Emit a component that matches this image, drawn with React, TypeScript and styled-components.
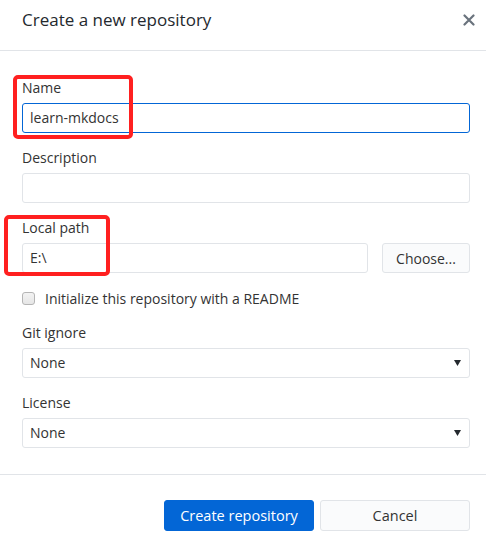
import React from "react";
import styled, { createGlobalStyle } from "styled-components";

const Global = createGlobalStyle`
  html, body { margin: 0; padding: 0; background: #fff; }
  body { font-family: "Open Sans", "Noto Sans", sans-serif; color: #333; }
  * { box-sizing: border-box; }
`;

const Dialog = styled.div`
  position: relative;
  width: 486px;
  height: 545px;
  background: #fff;
  display: flex;
  flex-direction: column;
`;

const Header = styled.header`
  height: 51px;
  border-bottom: 1px solid #e1e4e8;
  display: flex;
  align-items: flex-start;
  justify-content: space-between;
  padding: 8px 11px 0 22px;
`;

const Title = styled.h1`
  margin: 0;
  font-size: 17px;
  font-weight: 400;
  line-height: 24px;
  color: #24292e;
`;

const Close = styled.button`
  border: 0;
  background: none;
  padding: 0;
  margin-top: 6px;
  width: 12px;
  height: 12px;
  display: flex;
  color: #6a737d;
`;

const Form = styled.div`
  display: flex;
  flex-direction: column;
  gap: 15px;
  padding: 27px 16px 26px 22px;
  border-bottom: 1px solid #e1e4e8;
`;

const Group = styled.div`
  display: flex;
  flex-direction: column;
  gap: 5px;
`;

const Label = styled.label`
  font-size: 14px;
  line-height: 20px;
  color: #333;
`;

const Input = styled.div<{ $focus?: boolean }>`
  height: 30px;
  border: 1px solid ${(p) => (p.$focus ? "#0366d6" : "#e1e4e8")};
  border-radius: 3px;
  padding: 0 7px;
  font-size: 14px;
  line-height: 28px;
  color: #333;
  flex: 1 1 auto;
  background: #fff;
`;

const Row = styled.div`
  display: flex;
  gap: 14px;
`;

const SmallButton = styled.button`
  width: 88px;
  height: 30px;
  flex: none;
  border: 1px solid #e1e4e8;
  border-radius: 3px;
  background: #fafbfc;
  font-family: inherit;
  font-size: 14px;
  color: #333;
  padding: 0;
`;

const CheckRow = styled.label`
  height: 20px;
  display: flex;
  align-items: center;
  gap: 10px;
  font-size: 14px;
  color: #333;
`;

const Box = styled.span`
  width: 13px;
  height: 13px;
  border: 1px solid #b5b5b5;
  border-radius: 3px;
  background: linear-gradient(#f3f3f3, #e6e6e6);
`;

const Select = styled(Input)`
  display: flex;
  align-items: center;
  justify-content: space-between;
  padding-right: 8px;
`;

const Footer = styled.footer`
  display: flex;
  justify-content: flex-end;
  gap: 6px;
  padding: 25px 16px 0 0;
`;

const Btn = styled.button<{ $primary?: boolean }>`
  width: 150px;
  height: 31px;
  border-radius: 3px;
  font-family: inherit;
  font-size: 14.5px;
  padding: 0;
  border: 1px solid ${(p) => (p.$primary ? "#0366d6" : "#e1e4e8")};
  background: ${(p) => (p.$primary ? "#0366d6" : "#fafbfc")};
  color: ${(p) => (p.$primary ? "#fff" : "#333")};
`;

const Highlight = styled.div`
  position: absolute;
  border: 4px solid #ff2020;
  border-radius: 5px;
  pointer-events: none;
`;

const Arrow = () => (
  <svg width="7" height="6" viewBox="0 0 7 6">
    <path d="M0 0h7L3.5 6z" fill="#24292e" />
  </svg>
);

export default function App() {
  return (
    <>
      <Global />
      <Dialog>
        <Header>
          <Title>Create a new repository</Title>
          <Close aria-label="Close">
            <svg width="12" height="12" viewBox="0 0 12 12">
              <path d="M1.5 1.5l9 9M10.5 1.5l-9 9" stroke="currentColor" strokeWidth="2.2" strokeLinecap="round" />
            </svg>
          </Close>
        </Header>
        <Form>
          <Group>
            <Label>Name</Label>
            <Input $focus>learn-mkdocs</Input>
          </Group>
          <Group>
            <Label>Description</Label>
            <Input />
          </Group>
          <Group>
            <Label>Local path</Label>
            <Row>
              <Input>E:\</Input>
              <SmallButton>Choose...</SmallButton>
            </Row>
          </Group>
          <CheckRow>
            <Box />
            Initialize this repository with a README
          </CheckRow>
          <Group>
            <Label>Git ignore</Label>
            <Select>
              None
              <Arrow />
            </Select>
          </Group>
          <Group>
            <Label>License</Label>
            <Select>
              None
              <Arrow />
            </Select>
          </Group>
        </Form>
        <Footer>
          <Btn $primary>Create repository</Btn>
          <Btn>Cancel</Btn>
        </Footer>
        <Highlight style={{ left: 13, top: 75, width: 120, height: 64 }} />
        <Highlight style={{ left: 4, top: 215, width: 106, height: 61 }} />
      </Dialog>
    </>
  );
}
